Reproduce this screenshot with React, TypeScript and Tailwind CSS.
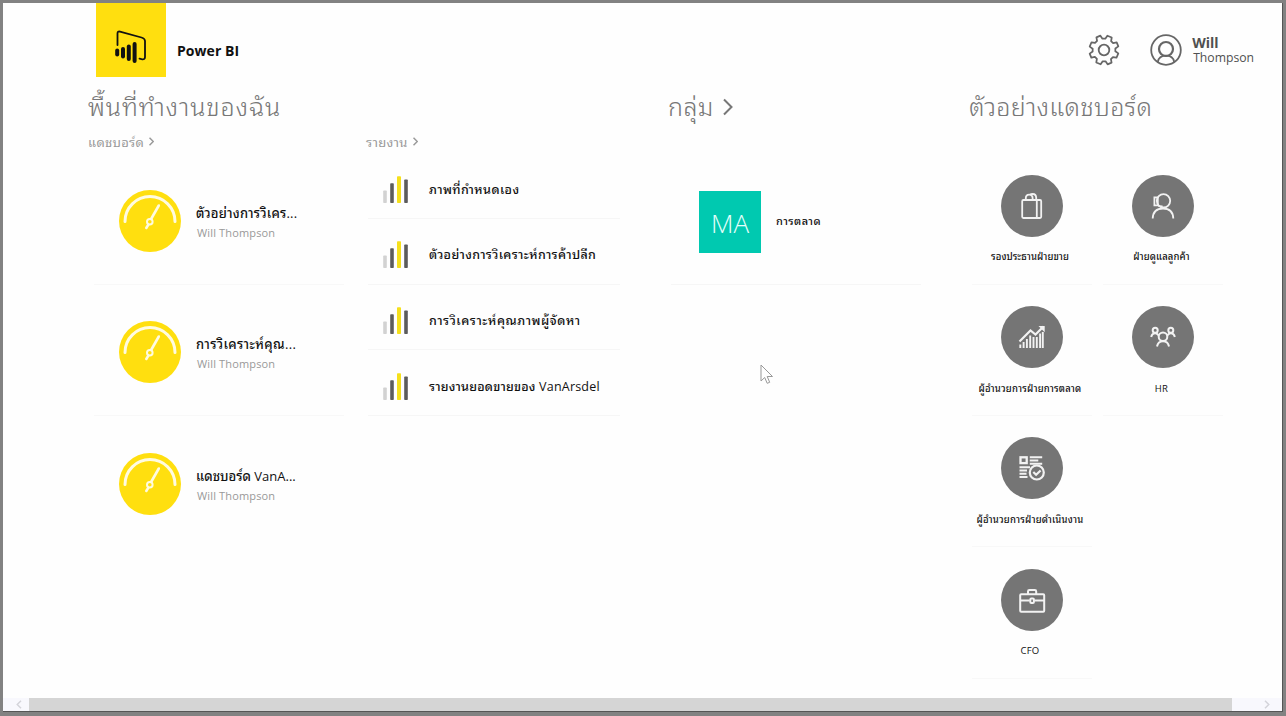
import type { ReactNode } from "react";

const ink = "text-[#111]";

function Chevron({ className }: { className: string }) {
  return (
    <svg viewBox="0 0 10 18" fill="none" stroke="currentColor" className={className}>
      <path d="M1 1.5 8.5 9 1 16.5" />
    </svg>
  );
}

function Logo() {
  return (
    <div className="flex h-[73.5px] w-[70px] items-center justify-center bg-[#ffdf0f]">
      <svg width="70" height="74" viewBox="0 0 70 74" fill="none" stroke="#111" strokeLinecap="round">
        <path d="M21.5 42V30.5Q21.5 28 24 28.6L45.5 34.5Q49 35.5 49 38V54Q49 57 45.5 56.2L43.5 55.6" strokeWidth="1.8" />
        <path d="M21.2 47.5v4" strokeWidth="4" />
        <path d="M27 46v7.5" strokeWidth="4" />
        <path d="M32.8 43.5v12.5" strokeWidth="4" />
        <path d="M38.6 41v17" strokeWidth="4" />
      </svg>
    </div>
  );
}

function Gear() {
  return (
    <svg width="32" height="32" viewBox="-16 -16 32 32" fill="none" stroke="#666" strokeWidth="1.8" strokeLinejoin="round">
      <path d="M-3.2 -11.2 -2.4 -14.8H2.4L3.2 -11.2 5.9 -10.1 9 -12.1 12.1 -9 10.1 -5.9 11.2 -3.2 14.8 -2.4V2.4L11.2 3.2 10.1 5.9 12.1 9 9 12.1 5.9 10.1 3.2 11.2 2.4 14.8H-2.4L-3.2 11.2 -5.9 10.1 -9 12.1 -12.1 9 -10.1 5.9 -11.2 3.2 -14.8 2.4V-2.4L-11.2 -3.2 -10.1 -5.9 -12.1 -9 -9 -12.1 -5.9 -10.1Z" transform="rotate(22.5) scale(0.98)" />
      <circle r="5.3" />
    </svg>
  );
}

function Avatar() {
  return (
    <svg width="32" height="32" viewBox="0 0 32 32" fill="none" stroke="#666" strokeWidth="1.8">
      <circle cx="16" cy="16" r="14.8" />
      <circle cx="16" cy="15" r="7" strokeWidth="2.2" />
      <path d="M7.8 28C8.5 24 11.5 21.7 16 21.7S23.5 24 24.2 28" />
    </svg>
  );
}

function Gauge() {
  return (
    <svg width="62" height="62" viewBox="0 0 62 62" fill="none" stroke="#fffbe0" strokeLinecap="round" className="shrink-0">
      <circle cx="31" cy="31" r="31" fill="#ffdf0f" stroke="none" />
      <path d="M6 31.5a25 25 0 0 1 50 0" strokeWidth="3" />
      <path d="M39.8 15.5 32.4 28.5M29.2 34.8 27.3 38" strokeWidth="2.6" />
      <circle cx="30.8" cy="31.7" r="2.8" strokeWidth="2" />
    </svg>
  );
}

function Bars() {
  return (
    <svg width="26" height="28" viewBox="0 0 26 28" className="shrink-0">
      <rect x="0.2" y="14.5" width="3.6" height="12.5" rx="0.8" fill="#d2d2d2" />
      <rect x="7.2" y="7.2" width="3.6" height="19.8" rx="0.8" fill="#5c5c5c" />
      <rect x="14" y="0.3" width="4" height="26.7" rx="0.8" fill="#f5e01c" />
      <rect x="21.2" y="3.5" width="3.6" height="23.5" rx="0.8" fill="#5c5c5c" />
    </svg>
  );
}

function Disc({ children }: { children: ReactNode }) {
  return (
    <svg width="62" height="62" viewBox="0 0 62 62" fill="none" stroke="#f2f2f2" strokeWidth="1.8" className="shrink-0">
      <circle cx="31" cy="31" r="31" fill="#757575" stroke="none" />
      {children}
    </svg>
  );
}

const bag = (
  <>
    <rect x="21.2" y="25" width="19" height="18" rx="1.2" />
    <path d="M35.8 25v18M24.8 25v-1.8q0-3.6 3.4-3.6t3.4 3.6V25M29 20q1-1 2.7-1 3.5 0 3.5 3.8V25" />
  </>
);

const agent = (
  <>
    <circle cx="31.5" cy="25.8" r="6.7" />
    <path d="M20.7 43.5C21 36.5 25 33.5 31 33.5S41 36.5 41.3 43.5M26 22.3h-3.6v8H26M25.8 22v8.5M25.8 30.3q2 1.4 4.7.9" />
  </>
);

const growth = (
  <>
    <path d="M19.3 42v-3.5M22.6 42v-6M25.9 42v-9M29.2 42V29.5M32.5 42V31M35.8 42V31M39.1 42V27.5M41.8 42V26" strokeWidth="1.9" />
    <path d="M18.5 35.5 29.5 24.5 34.5 28.5 42.5 20.5" strokeWidth="2.2" />
    <path d="M37.5 20h6.2v6.2Z" fill="#f2f2f2" stroke="none" />
  </>
);

const team = (
  <>
    <circle cx="31" cy="30.8" r="4.3" strokeWidth="2" />
    <path d="M25 40.5q1-5.2 6-5.2t6 5.2" strokeWidth="2" />
    <circle cx="23.2" cy="24.3" r="2.5" strokeWidth="2" />
    <circle cx="38.8" cy="24.3" r="2.5" strokeWidth="2" />
    <path d="M19.2 31q.8-3.8 4-3.8 2 0 3.5 2.2M42.8 31q-.8-3.8-4-3.8-2 0-3.5 2.2" strokeWidth="2" />
  </>
);

const report = (
  <>
    <rect x="19.5" y="20.3" width="6.2" height="5.8" strokeWidth="2.3" />
    <path d="M28.8 20.2h12.4M28.8 23.4h8.5M28.8 26.7h12.4M18.5 30.3h10.5M18.5 33.5h7.5M18.5 36.7h7M18.5 39.9h8" strokeWidth="2" />
    <circle cx="35.8" cy="35.5" r="7" strokeWidth="2.2" />
    <path d="m32.3 35 2.8 2.8 4.5-4.3" strokeWidth="2.2" />
  </>
);

const briefcase = (
  <>
    <rect x="19.2" y="25.2" width="24" height="17.6" rx="1" strokeWidth="2" />
    <path d="M27 25v-2.5q0-1.4 1.4-1.4h5.4q1.4 0 1.4 1.4V25M19.2 31.5h9.5M33.5 31.5h9.7" strokeWidth="2" />
    <rect x="29.3" y="29.5" width="3.6" height="4.6" rx="1" strokeWidth="2" />
  </>
);

const dashboards = [
  { name: "ตัวอย่างการวิเคร...", spacing: "tracking-[0.2px]" },
  { name: "การวิเคราะห์คุณ...", spacing: "tracking-[0.35px]" },
  { name: "แดชบอร์ด VanA...", spacing: "tracking-[0px]" },
];

const reports = [
  { name: "ภาพที่กำหนดเอง", spacing: "tracking-[0.4px]" },
  { name: "ตัวอย่างการวิเคราะห์การค้าปลีก", spacing: "tracking-[0.35px]" },
  { name: "การวิเคราะห์คุณภาพผู้จัดหา", spacing: "tracking-[0.57px]" },
  { name: "รายงานยอดขายของ VanArsdel", spacing: "tracking-[0.2px]" },
];

const samples: ({ name: string; spacing: string; icon: ReactNode } | null)[] = [
  { name: "รองประธานฝ่ายขาย", spacing: "tracking-[0.06px]", icon: bag },
  { name: "ฝ่ายดูแลลูกค้า", spacing: "tracking-[0.1px]", icon: agent },
  { name: "ผู้อำนวยการฝ่ายการตลาด", spacing: "tracking-[0.2px]", icon: growth },
  { name: "HR", spacing: "tracking-[0.2px]", icon: team },
  { name: "ผู้อำนวยการฝ่ายดำเนินงาน", spacing: "tracking-[0.2px]", icon: report },
  null,
  { name: "CFO", spacing: "tracking-[0.2px]", icon: briefcase },
];

export default function App() {
  return (
    <div className="relative flex h-[716px] w-[1286px] flex-col overflow-hidden border-[3px] border-b-4 border-[#828282] bg-[#fefefe] font-['Open_Sans','Noto_Sans_Thai_Looped','Noto_Sans_Thai','Noto_Sans',sans-serif] whitespace-nowrap">
      <div className="flex grow flex-col border-r border-b border-[#555]">
        <header className="flex h-[74px] shrink-0 items-start pl-[92.5px]">
          <Logo />
          <h1 className="mt-[38px] ml-[11.5px] text-[14px] leading-[20px] font-bold tracking-[0.05px] text-[#111]">Power BI</h1>
          <div className="mt-[31px] mr-[28px] ml-auto flex items-start">
            <Gear />
            <div className="ml-[30px]"><Avatar /></div>
            <div className="ml-[10px] text-[#505050]">
              <div className="pt-px text-[14px] leading-[15px] font-bold">Will</div>
              <div className="ml-px text-[12.2px] leading-[15px]">Thompson</div>
            </div>
          </div>
        </header>

        <main className="flex grow pl-[85px]">
          <section className="w-[580px]">
            <h2 className="h-[52.5px] pt-[11px] text-[25px] leading-[36px] font-light tracking-[0.9px] text-[#777]">พื้นที่ทำงานของฉัน</h2>
            <div className="flex">
              <div className="w-[278px]">
                <h3 className="flex h-[24px] items-center gap-[5px] text-[13px] leading-[24px] tracking-[0.3px] text-[#999]">
                  แดชบอร์ด <Chevron className="h-[9px] w-[5px] stroke-3" />
                </h3>
                {dashboards.map((d) => (
                  <div key={d.name} className="ml-[6px] flex h-[131.4px] w-[250px] border-b border-[#f8f8f8] pt-[36.3px] pl-[25px] last:border-0">
                    <Gauge />
                    <div className="ml-[15px] pt-[13px]">
                      <div className={`text-[13px] leading-[20px] font-medium ${d.spacing} ${ink}`}>{d.name}</div>
                      <div className="ml-px text-[11px] leading-[20px] tracking-[0.15px] text-[#999]">Will Thompson</div>
                    </div>
                  </div>
                ))}
              </div>
              <div className="w-[302px]">
                <h3 className="flex h-[24px] items-center gap-[5px] text-[13px] leading-[24px] tracking-[0.3px] text-[#999]">
                  รายงาน <Chevron className="h-[9px] w-[5px] stroke-3" />
                </h3>
                {reports.map((r) => (
                  <div key={r.name} className={`ml-[2px] flex h-[65.65px] w-[252px] items-center border-b border-[#f6f6f6] pt-[8px] pl-[15px] ${ink}`}>
                    <Bars />
                    <span className={`ml-[20px] text-[12.5px] leading-[20px] font-medium ${r.spacing}`}>{r.name}</span>
                  </div>
                ))}
              </div>
            </div>
          </section>

          <section className="w-[301px]">
            <h2 className="flex h-[76.5px] gap-[9px] pt-[11px] text-[25px] leading-[36px] font-light tracking-[0.5px] text-[#777]">
              กลุ่ม <Chevron className="mt-[10px] h-[18px] w-[10px] stroke-2" />
            </h2>
            <div className="ml-[3px] flex h-[131.3px] w-[250px] border-b border-[#f6f6f6] pt-[37.5px] pl-[28px]">
              <div className="flex size-[62px] items-center justify-center bg-[#00c9b0] pt-[3px] text-[26px] font-light text-[#e5fffb]">MA</div>
              <div className={`mt-[20px] ml-[15px] text-[11px] leading-[20px] font-medium tracking-[0.45px] ${ink}`}>การตลาด</div>
            </div>
          </section>

          <section className="w-[270px]">
            <h2 className="h-[76.5px] pt-[11px] text-[25px] leading-[36px] font-light tracking-[0.3px] text-[#777]">ตัวอย่างแดชบอร์ด</h2>
            <div className="grid grid-cols-[120px_120px] gap-x-[11.5px] pl-[2.5px]">
              {samples.map((s, i) =>
                s ? (
                  <div key={s.name} className={`flex h-[131.3px] flex-col items-center border-b border-[#f8f8f8] pt-[21.3px] ${ink}`}>
                    <Disc>{s.icon}</Disc>
                    <div className={`mt-[10.7px] pr-[3px] text-[9.5px] leading-[20px] font-medium ${s.spacing}`}>{s.name}</div>
                  </div>
                ) : (
                  <div key={i} />
                ),
              )}
            </div>
          </section>
        </main>

        <footer className="flex h-[13px] shrink-0 items-center bg-[#f8f8fd] text-[#d4d4da]">
          <div className="flex w-[26px] justify-center pl-[6px]"><Chevron className="h-[9px] w-[6px] rotate-180 stroke-3" /></div>
          <div className="h-full w-[1203px] bg-[#d5d5d5]" />
          <div className="flex grow justify-end pr-[12px]"><Chevron className="h-[9px] w-[6px] stroke-3" /></div>
        </footer>
      </div>

      <svg className="absolute top-[361px] left-[757px]" width="14" height="21" viewBox="0 0 14 21" fill="#fff" stroke="#999" strokeWidth="1">
        <path d="M1 1v16l3.7-3.5 2.5 5.8 2.5-1-2.5-5.8h5.3Z" />
      </svg>
    </div>
  );
}
